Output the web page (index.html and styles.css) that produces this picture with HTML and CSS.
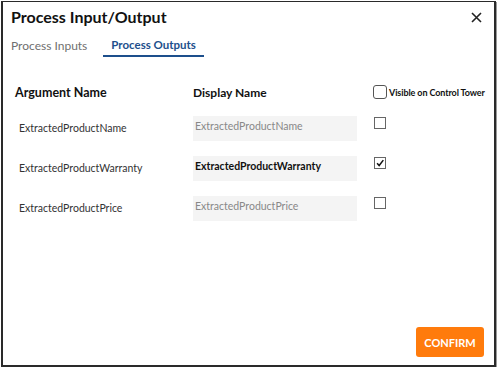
FILE: index.html
```html
<!DOCTYPE html>
<html>
<head>
<meta charset="utf-8">
<link rel="stylesheet" href="styles.css">
</head>
<body>
<div class="dialog">
  <div class="header">
    <h1 class="title">Process Input/Output</h1>
    <svg class="close" width="11" height="11" viewBox="0 0 11 11"><path d="M1 1 L10 10 M10 1 L1 10" stroke="#222" stroke-width="1.6" fill="none"/></svg>
  </div>
  <div class="tabs">
    <div class="tab">Process Inputs</div>
    <div class="tab active">Process Outputs</div>
  </div>
  <div class="table">
    <div class="row head">
      <div class="c1">Argument Name</div>
      <div class="c2">Display Name</div>
      <div class="c3"><span class="hbox"></span><span class="vis">Visible on Control Tower</span></div>
    </div>
    <div class="row">
      <div class="c1 arg">ExtractedProductName</div>
      <div class="c2"><div class="input">ExtractedProductName</div></div>
      <div class="c3"><span class="cbox"></span></div>
    </div>
    <div class="row">
      <div class="c1 arg">ExtractedProductWarranty</div>
      <div class="c2"><div class="input filled">ExtractedProductWarranty</div></div>
      <div class="c3"><span class="cbox"><svg width="12" height="12" viewBox="0 0 12 12"><path d="M2.5 6.2 L5 9 L10 2.5" stroke="#111" stroke-width="1.8" fill="none"/></svg></span></div>
    </div>
    <div class="row">
      <div class="c1 arg">ExtractedProductPrice</div>
      <div class="c2"><div class="input">ExtractedProductPrice</div></div>
      <div class="c3"><span class="cbox"></span></div>
    </div>
  </div>
  <div class="footer">
    <button class="confirm">CONFIRM</button>
  </div>
</div>
</body>
</html>
```
FILE: styles.css
```css
html, body { margin: 0; padding: 0; background: #fff; }
body { font-family: Lato, "Noto Sans", sans-serif; color: #222; }
.dialog {
  box-sizing: border-box;
  margin: 1px 0 0 1px;
  width: 495px;
  height: 366px;
  border: 2px solid #2a2a2a;
  border-top-width: 1px;
  box-shadow: 1px 1px 0 #9a9a9a;
  display: flex;
  flex-direction: column;
  padding: 0 9px 0 8px;
}
.header { display: flex; justify-content: space-between; align-items: center; height: 28px; margin-top: 0; }
.title { margin: 0; font-size: 16px; font-weight: 700; color: #111; }
.close { margin-right: 3px; margin-top: 2px; }
.tabs { display: flex; height: 27px; }
.tab { font-size: 12px; font-weight: 400; color: #6f6f6f; padding-top: 8px; box-sizing: border-box; height: 27px; }
.tab.active { font-size: 11.5px; color: #1d4f8c; font-weight: 700; border-bottom: 2px solid #1d4f8c; margin-left: 16px; padding: 8px 8px 0 8px; }
.table { margin-top: 24px; display: flex; flex-direction: column; }
.row { display: flex; align-items: center; height: 40px; }
.row.head { height: 22px; margin-bottom: 5px; }
.c1 { width: 178px; padding-left: 4px; font-size: 12.5px; }
.head .c1, .head .c2 { font-weight: 700; color: #111; }
.c2 { width: 180px; font-size: 12px; }
.c3 { display: flex; align-items: center; white-space: nowrap; }
.arg { font-size: 10.5px; color: #333; padding-left: 8px; width: 174px; }
.hbox { box-sizing: border-box; width: 14px; height: 14px; border: 1px solid #555; border-radius: 3px; margin-right: 2px; }
.vis { font-size: 9px; font-weight: 700; color: #111; letter-spacing: -0.1px; }
.input { box-sizing: border-box; width: 164px; height: 25px; background: #f4f4f4; font-size: 10.5px; color: #888; padding: 2px 0 0 2px; line-height: 16px; }
.input.filled { color: #111; font-weight: 700; }
.cbox { box-sizing: border-box; width: 12px; height: 12px; border: 1px solid #666; display: flex; align-items: center; justify-content: center; margin-left: 1px; margin-top: -10px; }
.footer { margin-top: auto; display: flex; justify-content: flex-end; padding-bottom: 8px; }
.confirm { width: 68px; height: 30px; background: #ff7b0c; color: #fff; border: none; border-radius: 3px; font-family: Lato, sans-serif; font-weight: 700; font-size: 11px; margin-right: 1px; }
```
